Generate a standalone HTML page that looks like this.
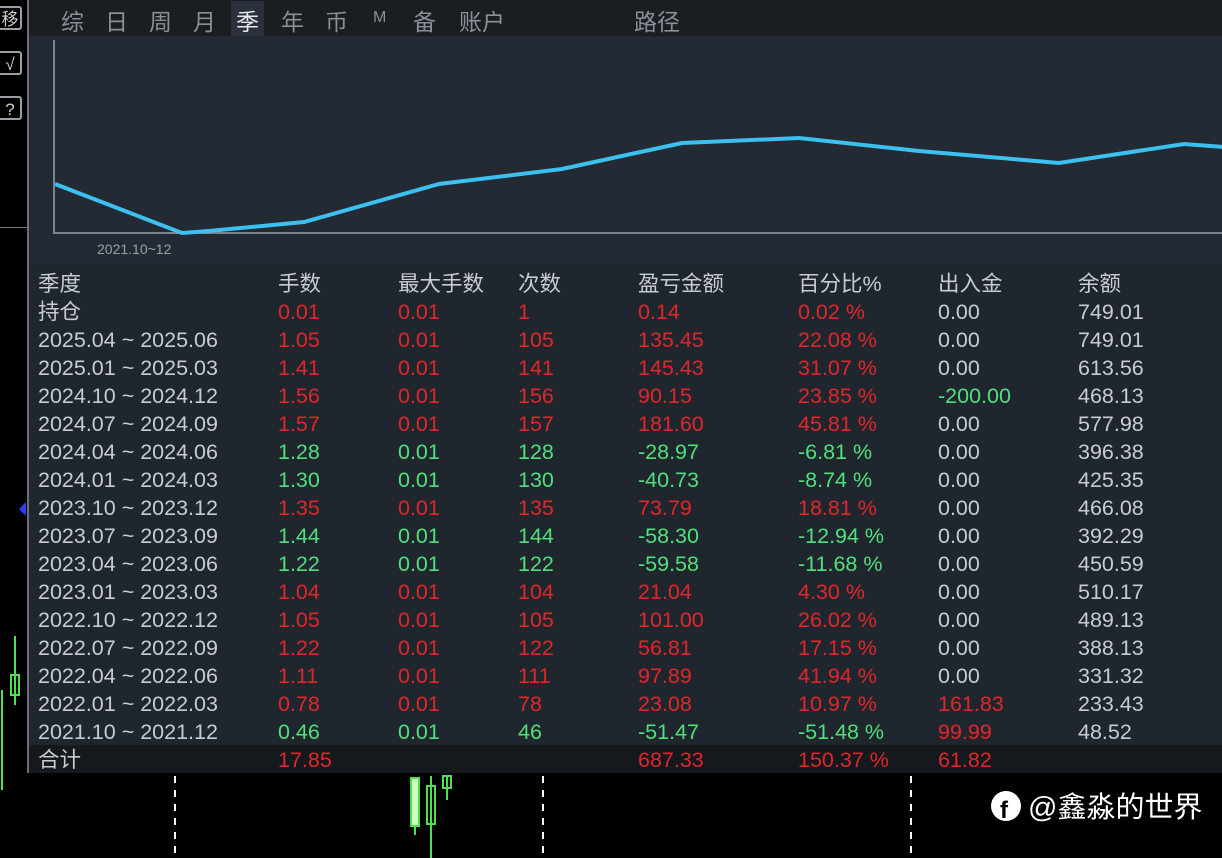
<!DOCTYPE html><html><head><meta charset="utf-8"><style>
body{margin:0;width:1222px;height:858px;background:#000;position:relative;overflow:hidden;font-family:"Liberation Sans","Noto Sans CJK SC",sans-serif}
.panel{position:absolute;left:27px;top:0;width:1195px;height:773px;background:#1f262e;border-left:2px solid #6b7078;border-bottom:2px solid #6b7078;box-sizing:border-box}
.tabs{position:absolute;left:0;top:0;right:0;height:36px;background:#1a1d21;color:#8a8f96;font-size:23px}
.tabs span{position:absolute;top:3px}
.chart{position:absolute;left:0;top:36px;right:0;height:228px;background:#232a33}
.t{position:absolute;font-size:21.5px;line-height:28px;color:#c8ccd2;white-space:nowrap}
.r{color:#e0262a}.g{color:#4fe07c}
.btn{position:absolute;left:0;width:22px;height:24px;border:2px solid #9aa0a6;border-left:none;border-radius:0 3px 3px 0;color:#ccc;font-size:17px;text-align:center;line-height:24px;box-sizing:border-box}
</style></head><body>
<div class="btn" style="top:6px">移</div><div class="btn" style="top:51px">√</div><div class="btn" style="top:96px">?</div>
<div style="position:absolute;left:0;top:227px;width:27px;height:1px;background:#777"></div>
<svg style="position:absolute;left:0;top:0" width="1222" height="858">
<path d="M19 509 L26 502 L26 516 Z" fill="#2a40ff"/>
<line x1="15" y1="636" x2="15" y2="705" stroke="#4fe04f" stroke-width="2"/><rect x="11" y="675" width="8" height="20" fill="none" stroke="#4fe04f" stroke-width="2"/>
<line x1="2" y1="690" x2="2" y2="790" stroke="#4fe04f" stroke-width="2"/>
<g stroke="#fff" stroke-width="2" stroke-dasharray="7,7"><line x1="175" y1="776" x2="175" y2="858"/><line x1="543" y1="776" x2="543" y2="858"/><line x1="911" y1="776" x2="911" y2="858"/></g>
<rect x="411" y="778" width="8" height="48" fill="#cfffc0" stroke="#4fe04f" stroke-width="2"/>
<line x1="415" y1="826" x2="415" y2="835" stroke="#4fe04f" stroke-width="2"/>
<line x1="431" y1="776" x2="431" y2="858" stroke="#4fe04f" stroke-width="2"/><rect x="427" y="786" width="8" height="38" fill="none" stroke="#4fe04f" stroke-width="2"/>
<line x1="447" y1="776" x2="447" y2="800" stroke="#4fe04f" stroke-width="2"/><rect x="443" y="776" width="8" height="12" fill="none" stroke="#4fe04f" stroke-width="2"/>
<circle cx="1006" cy="806" r="15" fill="#fff"/><text x="1000" y="818" font-size="24" font-weight="bold" fill="#000" font-family="Liberation Sans">f</text>
<text x="1028" y="817" font-size="29" fill="#fff" font-family="Liberation Sans, Noto Sans CJK SC, sans-serif">@鑫淼的世界</text>
</svg>
<div class="panel">
<div class="tabs"><span style="left:32px">综</span><span style="left:76px">日</span><span style="left:120px">周</span><span style="left:164px">月</span><span style="left:202px;top:1px;padding:2px 5px;background:#2a313b;color:#e6e9ee">季</span><span style="left:252px">年</span><span style="left:296px">币</span><span style="left:344px;font-size:16px;top:9px">M</span><span style="left:384px">备</span><span style="left:430px">账户</span><span style="left:605px">路径</span></div>
<div class="chart">
<svg width="1195" height="228" style="position:absolute;left:0;top:0">
<polyline points="25,4 25,197 1195,197" fill="none" stroke="#7d838a" stroke-width="2"/>
<polyline points="26,148 153,197 180,195 275,186 410,148 533,133 653,107 770,102 890,115 1030,127 1155,108 1195,111" fill="none" stroke="#3cc0f0" stroke-width="4"/>
<text x="68" y="218" font-size="14" fill="#9aa0a6" font-family="Liberation Sans">2021.10~12</text>
</svg></div>
<div style="position:absolute;left:0;right:0;top:745px;height:28px;background:#15181c"></div>
<div id="tb"></div>
</div>
<script>
var rows=[["季度","手数","最大手数","次数","盈亏金额","百分比%","出入金","余额","h"],
["持仓","0.01","0.01","1","0.14","0.02 %","0.00","749.01","r"],
["2025.04 ~ 2025.06","1.05","0.01","105","135.45","22.08 %","0.00","749.01","r"],
["2025.01 ~ 2025.03","1.41","0.01","141","145.43","31.07 %","0.00","613.56","r"],
["2024.10 ~ 2024.12","1.56","0.01","156","90.15","23.85 %","-200.00","468.13","r","g"],
["2024.07 ~ 2024.09","1.57","0.01","157","181.60","45.81 %","0.00","577.98","r"],
["2024.04 ~ 2024.06","1.28","0.01","128","-28.97","-6.81 %","0.00","396.38","g"],
["2024.01 ~ 2024.03","1.30","0.01","130","-40.73","-8.74 %","0.00","425.35","g"],
["2023.10 ~ 2023.12","1.35","0.01","135","73.79","18.81 %","0.00","466.08","r"],
["2023.07 ~ 2023.09","1.44","0.01","144","-58.30","-12.94 %","0.00","392.29","g"],
["2023.04 ~ 2023.06","1.22","0.01","122","-59.58","-11.68 %","0.00","450.59","g"],
["2023.01 ~ 2023.03","1.04","0.01","104","21.04","4.30 %","0.00","510.17","r"],
["2022.10 ~ 2022.12","1.05","0.01","105","101.00","26.02 %","0.00","489.13","r"],
["2022.07 ~ 2022.09","1.22","0.01","122","56.81","17.15 %","0.00","388.13","r"],
["2022.04 ~ 2022.06","1.11","0.01","111","97.89","41.94 %","0.00","331.32","r"],
["2022.01 ~ 2022.03","0.78","0.01","78","23.08","10.97 %","161.83","233.43","r","r"],
["2021.10 ~ 2021.12","0.46","0.01","46","-51.47","-51.48 %","99.99","48.52","g","r"],
["合计","17.85","","","687.33","150.37 %","61.82","","r","r"]];
var xs=[9,249,369,489,609,769,909,1049],h="";
rows.forEach(function(r,i){var top=270+i*28;r.slice(0,8).forEach(function(c,j){var cl="";if(r[8]!="h"&&j>0&&j<6)cl=r[8];if(j==6&&r[9])cl=r[9];
h+='<div class="t '+cl+'" style="left:'+xs[j]+'px;top:'+top+'px">'+c+'</div>';});});
document.getElementById("tb").innerHTML=h;
</script>
</body></html>
